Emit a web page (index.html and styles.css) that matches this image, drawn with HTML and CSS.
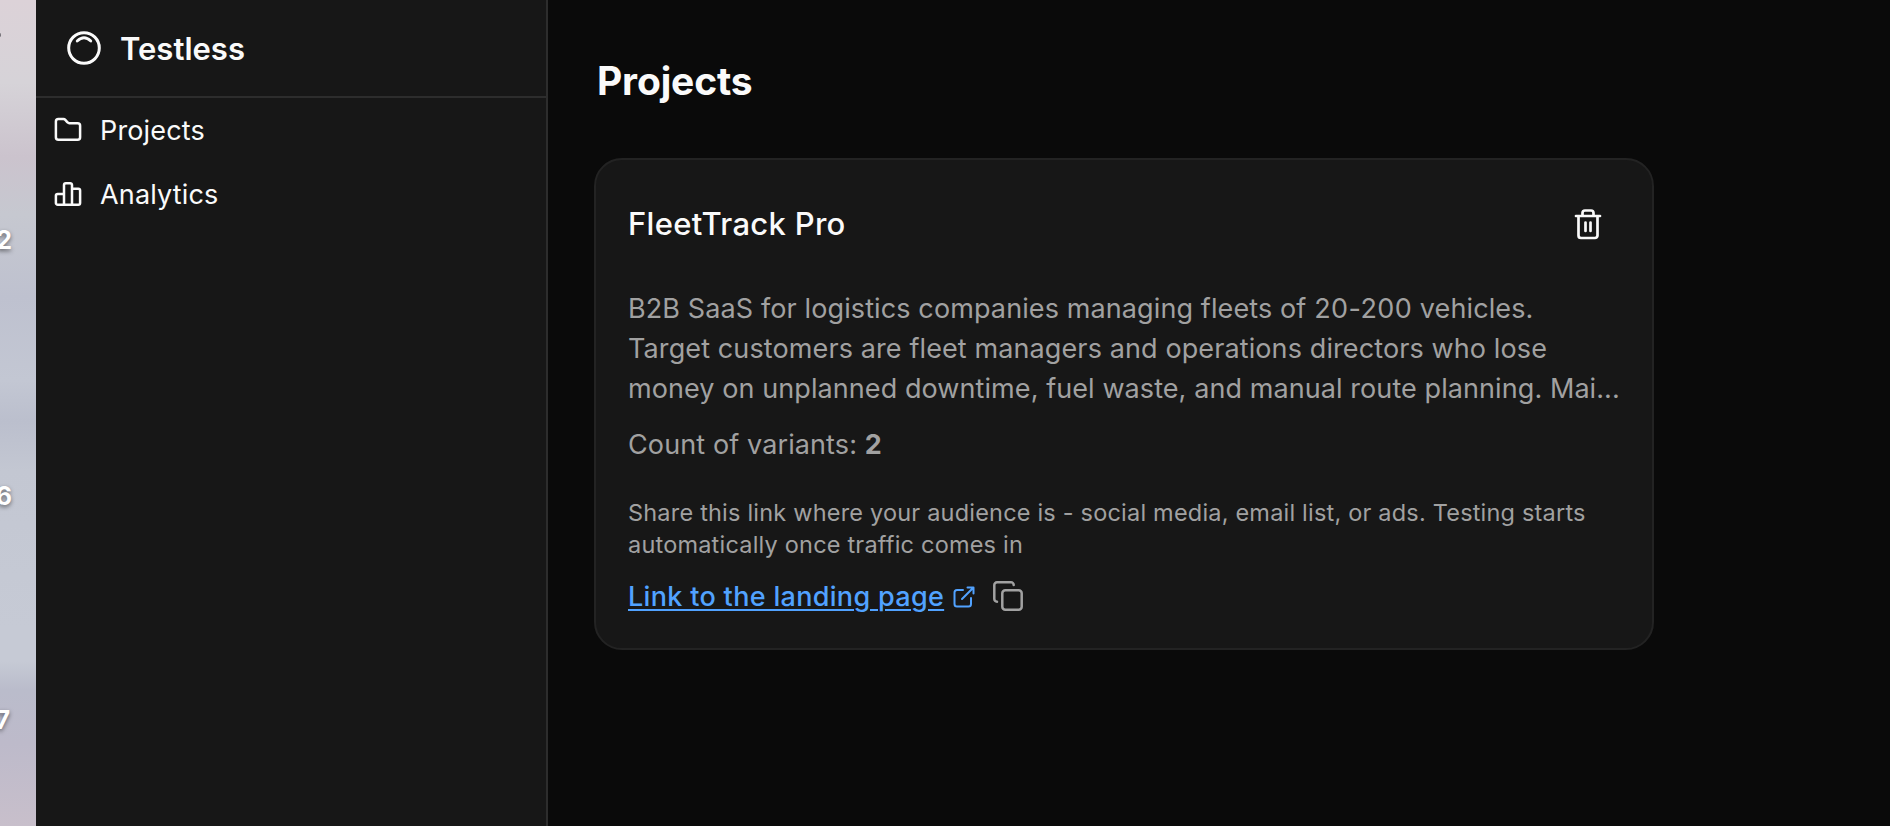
FILE: index.html
```html
<!DOCTYPE html>
<html lang="en">
<head>
<meta charset="utf-8">
<title>Testless</title>
<link rel="stylesheet" href="styles.css">
</head>
<body>
<div class="screen">
  <div class="wallpaper" aria-hidden="true">
    <span class="peek peek-dot"></span>
    <span class="peek peek-a">2</span>
    <span class="peek peek-b">6</span>
    <span class="peek peek-c">7</span>
  </div>
  <aside class="sidebar">
    <header class="brand">
      <svg class="brand-icon" viewBox="0 0 34 34" fill="none" stroke="currentColor" stroke-linecap="round"><circle cx="17" cy="17" r="15.3" stroke-width="3"/><path d="M10.200 10Q17 3.400 23.800 10" stroke-width="2.800"/></svg>
      <span class="brand-name">Testless</span>
    </header>
    <nav class="nav">
      <a class="nav-item">
        <svg class="nav-icon" viewBox="0 0 32 32" fill="none" stroke="currentColor" stroke-width="2.500" stroke-linecap="round" stroke-linejoin="round"><path d="M6.400 5h5.100a2.500 2.500 0 0 1 1.800.8l2.200 2.500a2.500 2.500 0 0 0 1.900.9h8.200a2.500 2.500 0 0 1 2.500 2.500v11.600a2.500 2.500 0 0 1-2.500 2.500H6.400a2.500 2.500 0 0 1-2.500-2.500V7.500A2.500 2.500 0 0 1 6.400 5z"/></svg>
        <span class="nav-label">Projects</span>
      </a>
      <a class="nav-item">
        <svg class="nav-icon" viewBox="0 0 32 32" fill="none" stroke="currentColor" stroke-width="2.500" stroke-linecap="round" stroke-linejoin="round"><path d="M12 26.700V7a1.800 1.800 0 0 1 1.800-1.800h4.400A1.800 1.800 0 0 1 20 7v19.700M12 16H5.700a1.800 1.800 0 0 0-1.800 1.800v7.100a1.800 1.800 0 0 0 1.800 1.800h20.600a1.800 1.800 0 0 0 1.800-1.800V12.500a1.800 1.800 0 0 0-1.800-1.800H20"/></svg>
        <span class="nav-label">Analytics</span>
      </a>
    </nav>
  </aside>
  <main class="content">
    <h1 class="page-title">Projects</h1>
    <article class="card">
      <div class="card-head">
        <h2 class="card-title">FleetTrack Pro</h2>
        <button class="icon-button" aria-label="Delete">
          <svg class="trash-icon" viewBox="0 0 28 32" fill="none" stroke="currentColor" stroke-width="2.700" stroke-linecap="round" stroke-linejoin="round"><path d="M2 8h24M4.500 8v19.500a2.500 2.500 0 0 0 2.500 2.500h14a2.500 2.500 0 0 0 2.500-2.500V8M8.500 8V5a2.500 2.500 0 0 1 2.500-2.500h6a2.500 2.500 0 0 1 2.500 2.500v3M11.500 14.500v8.500M16.500 14.500v8.500"/></svg>
        </button>
      </div>
      <p class="description">B2B SaaS for logistics companies managing fleets of <span class="range">20-200</span> vehicles.<br>Target customers are fleet managers and operations directors who lose<br><span class="last-line">money on unplanned downtime, fuel waste, and manual route planning. Mai...</span></p>
      <p class="variants">Count of variants: <b>2</b></p>
      <p class="hint">Share this link where your audience is - social media, email list, or ads. Testing starts<br>automatically once traffic comes in</p>
      <div class="link-row">
        <a class="landing-link">Link to the landing page</a>
        <svg class="external-icon" viewBox="0 0 22 22" fill="none" stroke="currentColor" stroke-width="2" stroke-linecap="round" stroke-linejoin="round"><path d="M10 4H4a2.500 2.500 0 0 0-2.500 2.500V18A2.500 2.500 0 0 0 4 20.500h11.500A2.500 2.500 0 0 0 18 18v-6M9 13 20.500 1.500M14.500 1.500h6v6"/></svg>
        <svg class="copy-icon" viewBox="0 0 30 30" fill="none" stroke="currentColor" stroke-width="2.500" stroke-linecap="round"><rect x="9.300" y="9.300" width="19.400" height="19.400" rx="3"/><path d="M4 20.700A2.700 2.700 0 0 1 1.300 18V4A2.700 2.700 0 0 1 4 1.300h14A2.700 2.700 0 0 1 20.700 4"/></svg>
      </div>
    </article>
  </main>
</div>
</body>
</html>
```
FILE: styles.css
```css
* { box-sizing: border-box; }
body { margin: 0; background: #0a0a0a; color: #fafafa; font-family: Inter, "Noto Sans", sans-serif; }
.screen { display: flex; width: 1890px; height: 826px; overflow: hidden; }
.wallpaper { position: relative; flex: none; width: 36px; overflow: hidden; background: linear-gradient(180deg, #dcd2d8 0%, #d6d3d8 10%, #cbc3cd 19%, #c6c8d0 26%, #bec1cf 36%, #c3c7d3 46%, #bbbfcd 51%, #c3c7d2 57%, #c6cad5 76%, #c6cad5 80%, #babccb 83.5%, #bdbaca 90%, #c8bfcb 100%); }
.peek { position: absolute; font-weight: 700; font-size: 25px; line-height: 30px; color: #fff; text-shadow: 0 2px 4px rgba(0,0,0,.5); }
.peek-dot { left: -2px; top: 33px; width: 3px; height: 4px; background: #77747b; border-radius: 2px; }
.peek-a { right: 24px; top: 225px; }
.peek-b { right: 24px; top: 481px; }
.peek-c { right: 26px; top: 705px; }
.sidebar { flex: none; width: 512px; background: #171717; border-right: 2px solid #2d2d2d; }
.brand { display: flex; align-items: center; gap: 19px; height: 98px; padding-left: 31px; border-bottom: 2px solid #2d2d2d; }
.brand-icon { width: 34px; height: 34px; }
.brand-name { padding-top: 2px; font-size: 31px; font-weight: 600; line-height: 40px; }
.nav { display: flex; flex-direction: column; }
.nav-item { display: flex; align-items: center; gap: 16px; height: 64px; padding-left: 16px; }
.nav-icon { width: 32px; height: 32px; }
.nav-label { padding-top: 2px; font-size: 27px; line-height: 40px; letter-spacing: 0.15px; }
.content { flex: 1; min-width: 0; padding: 56px 236px 0 46px; }
.page-title { margin: 0 0 52px; padding-left: 3px; font-size: 39px; font-weight: 700; line-height: 50px; letter-spacing: -0.15px; }
.card { height: 492px; padding: 30px 32px; background: #171717; border: 2px solid #232323; border-radius: 28px; }
.card-head { display: flex; justify-content: space-between; align-items: center; height: 68px; margin-bottom: 31px; }
.card-title { margin: 0; font-size: 31px; font-weight: 500; line-height: 40px; letter-spacing: 0.3px; }
.icon-button { display: flex; padding: 0 18px 0 0; border: 0; background: none; color: #fafafa; }
.trash-icon { width: 28px; height: 32px; }
.description, .variants { margin: 0; color: #a1a1a1; font-size: 27px; line-height: 40px; letter-spacing: 0.11px; white-space: nowrap; }
.range { letter-spacing: 0.4px; }
.last-line { letter-spacing: 0.08px; }
.variants { margin-top: 16px; }
.hint { margin: 32px 0 0; color: #a1a1a1; font-size: 23.5px; line-height: 32px; letter-spacing: 0.2px; white-space: nowrap; }
.link-row { display: flex; align-items: center; margin-top: 16px; height: 40px; color: #51a2ff; }
.landing-link { font-size: 27px; font-weight: 500; line-height: 40px; letter-spacing: 0.32px; text-decoration: underline; text-decoration-thickness: 2px; text-underline-offset: 3px; }
.external-icon { width: 22px; height: 22px; margin-left: 9px; margin-bottom: 1px; }
.copy-icon { width: 30px; height: 30px; margin: 0 0 2px 18px; color: #a1a1a1; }
```
